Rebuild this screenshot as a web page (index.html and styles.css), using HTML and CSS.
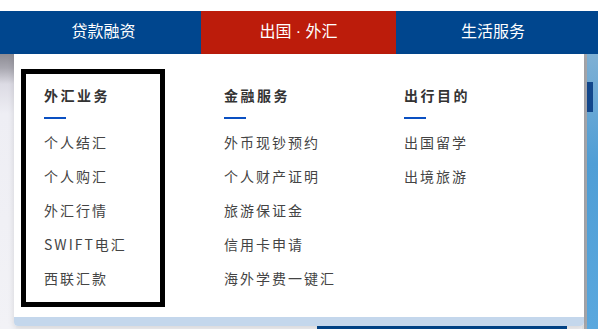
FILE: index.html
```html
<!DOCTYPE html>
<html lang="zh-CN">
<head>
<meta charset="utf-8">
<title>出国 · 外汇</title>
<link rel="stylesheet" href="styles.css">
</head>
<body>
<div class="page">
  <div class="topgap"></div>
  <nav class="nav">
    <a class="nav-item first">贷款融资</a>
    <a class="nav-item active">出国 · 外汇</a>
    <a class="nav-item last">生活服务</a>
  </nav>
  <div class="banner">
    <div class="banner-left"></div>
    <div class="banner-mid"><div class="banner-bar"></div></div>
    <div class="banner-right"><div class="banner-line"></div><div class="banner-pic"><span class="pic-mark"></span></div></div>
  </div>
  <div class="dropdown">
    <div class="cols">
      <div class="col">
        <div class="col-title">外汇业务</div>
        <div class="col-bar"></div>
        <ul class="col-list">
          <li>个人结汇</li>
          <li>个人购汇</li>
          <li>外汇行情</li>
          <li>SWIFT电汇</li>
          <li>西联汇款</li>
        </ul>
      </div>
      <div class="col">
        <div class="col-title">金融服务</div>
        <div class="col-bar"></div>
        <ul class="col-list">
          <li>外币现钞预约</li>
          <li>个人财产证明</li>
          <li>旅游保证金</li>
          <li>信用卡申请</li>
          <li>海外学费一键汇</li>
        </ul>
      </div>
      <div class="col">
        <div class="col-title">出行目的</div>
        <div class="col-bar"></div>
        <ul class="col-list">
          <li>出国留学</li>
          <li>出境旅游</li>
        </ul>
      </div>
    </div>
    <div class="dropdown-foot"></div>
  </div>
  <div class="highlight-box"></div>
</div>
</body>
</html>
```

FILE: styles.css
```css
* { box-sizing: border-box; }
html, body { margin: 0; padding: 0; background: #fff; }
body { font-family: "Noto Sans CJK SC", "Noto Sans", sans-serif; }
.page { position: relative; width: 598px; height: 329px; overflow: hidden; }
.topgap { height: 11px; background: #fff; }
.nav { display: flex; height: 43px; }
.nav-item {
  display: flex; align-items: center; justify-content: center;
  font-family: "Liberation Sans", "Noto Sans CJK SC", sans-serif;
  color: #fff; font-size: 16px; line-height: 1; text-decoration: none;
  background: #00468e; padding-bottom: 1px;
}
.nav-item.first { width: 201px; padding-left: 6px; }
.nav-item.active { width: 195px; background: #bc1c0b; }
.nav-item.last { width: 202px; padding-right: 8px; }

.banner { display: flex; height: 275px; background: #eef0f4; }
.banner-left {
  width: 16px;
  background: linear-gradient(180deg, #8d8c94 0px, #a8a7b0 14px, #dcdbe4 30px, #eeeef4 60px, #f2f2f6 100%);
}
.banner-mid { flex: 1; display: flex; align-items: flex-end; padding-left: 301px; padding-right: 13px; background: #f0f0f3; }
.banner-bar { width: 250px; height: 3px; background: #00468e; }
.banner-right { width: 16px; display: flex; background: #e6e6e8; }
.banner-line { width: 3px; margin-left: 2px; background: #a9a9ad; }
.banner-pic { position: relative; flex: 1; background: linear-gradient(180deg, #7fb0d4 0%, #4f9ed6 40%, #5aa8de 100%); }
.pic-mark { position: absolute; left: 0; top: 28px; width: 6px; height: 30px; background: #12478c; }

.dropdown {
  position: absolute; left: 14px; top: 54px; width: 570px;
  background: #fff; border-radius: 0 0 4px 4px; overflow: hidden;
  box-shadow: 0 2px 6px rgba(0,0,0,0.12);
}
.cols { display: flex; padding: 31px 0 0 30px; height: 263px; }
.col { width: 180px; }
.col-title {
  font-size: 14px; line-height: 20px; font-weight: bold; color: #333;
  letter-spacing: 2.5px;
}
.col-bar { width: 22px; height: 2px; background: #0a50c2; margin-top: 12px; }
.col-list { list-style: none; margin: 6px 0 0; padding: 0; }
.col-list li {
  font-size: 14px; line-height: 34px; height: 34px; color: #444;
  letter-spacing: 2px; white-space: nowrap;
}
.dropdown-foot { height: 9px; background: #c4d7ec; }

.highlight-box {
  position: absolute; left: 21px; top: 69px; width: 144px; height: 238px;
  border: 5px solid #000;
}
```
